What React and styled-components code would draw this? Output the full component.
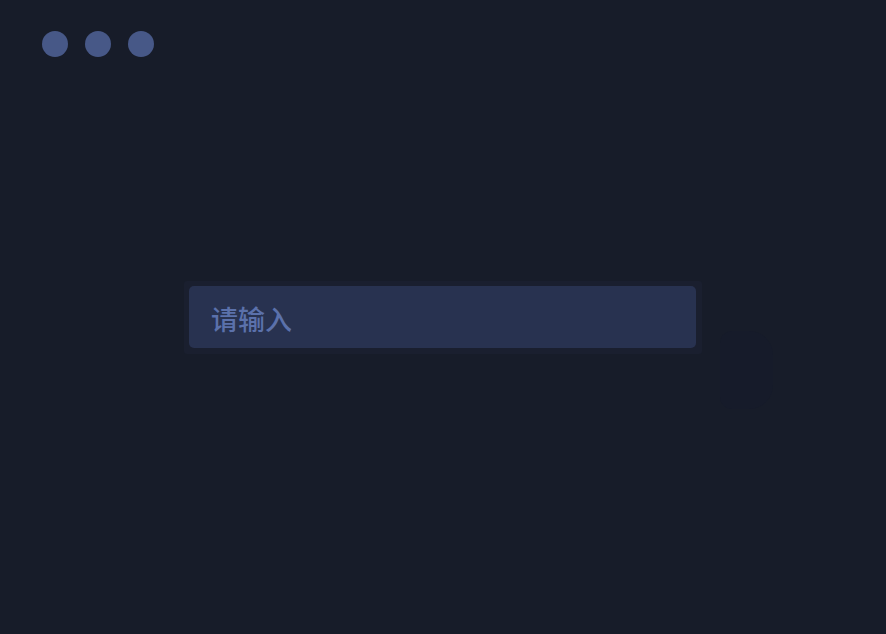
import React from "react";
import styled, { createGlobalStyle } from "styled-components";

const Global = createGlobalStyle`
  html, body { margin: 0; padding: 0; background: #171c29; }
  #root { min-height: 100vh; }
  * { box-sizing: border-box; }
`;

const Page = styled.div`
  min-height: 100vh;
  display: flex;
  flex-direction: column;
  background: #171c29;
  font-family: "Noto Sans CJK SC", "Noto Sans", sans-serif;
`;

const TitleBar = styled.div`
  display: flex;
  gap: 17px;
  padding: 31px 42px;
`;

const Dot = styled.span`
  width: 26px;
  height: 26px;
  border-radius: 50%;
  background: #475887;
`;

const Stage = styled.main`
  flex: 1;
  display: flex;
  align-items: center;
  justify-content: center;
  padding-bottom: 88px;
`;

const Frame = styled.div`
  position: relative;
  padding: 5px 6px 6px 5px;
  background: #1a1f2f;
  border-radius: 3px;
`;

const Field = styled.input`
  display: block;
  width: 507px;
  height: 62px;
  border: none;
  outline: none;
  border-radius: 5px;
  background: #283250;
  padding: 4px 0 0 22px;
  font-family: "Noto Sans CJK SC", "Noto Sans", sans-serif;
  font-size: 27px;
  font-weight: 500;
  color: #5b71ab;
  &::placeholder { color: #5b71ab; }
`;

const Ghost = styled.div`
  position: absolute;
  left: calc(100% + 18px);
  top: 50px;
  width: 53px;
  height: 78px;
  border-radius: 12px 24px 24px 12px;
  background: #161b2a;
`;

export default function App() {
  return (
    <Page>
      <Global />
      <TitleBar>
        <Dot />
        <Dot />
        <Dot />
      </TitleBar>
      <Stage>
        <Frame>
          <Field placeholder="请输入" />
          <Ghost />
        </Frame>
      </Stage>
    </Page>
  );
}
